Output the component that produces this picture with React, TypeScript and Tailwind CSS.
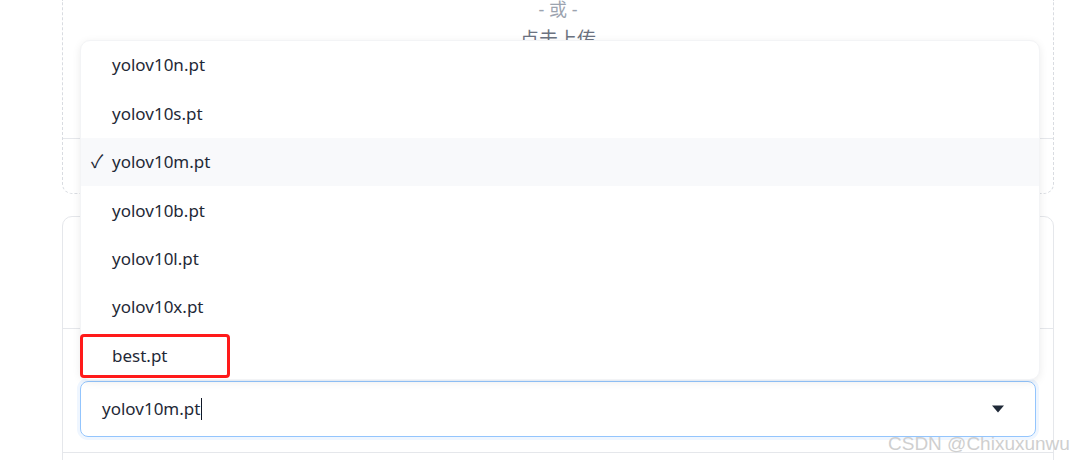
import React from "react";

const items = ["yolov10n.pt", "yolov10s.pt", "yolov10m.pt", "yolov10b.pt", "yolov10l.pt", "yolov10x.pt", "best.pt"];

export default function App() {
  return (
    <div
      className="relative w-[1072px] h-[460px] overflow-hidden bg-white"
      style={{ fontFamily: '"Noto Sans", "Noto Sans CJK SC", sans-serif' }}
    >
      <div className="px-[62px] pr-[18px]">
        {/* upload dashed box */}
        <div className="h-[194px] border-x border-b border-dashed border-[#d9dce1] rounded-b-[10px] flex flex-col">
          <div className="h-[138px] flex flex-col items-center">
            <div className="text-[18px] leading-[18px] text-[#9ca3af]">- 或 -</div>
            <div className="text-[19px] leading-[24px] text-[#6b7280] mt-[9px]">点击上传</div>
          </div>
          <div className="border-t border-[#e5e7eb]" />
        </div>
        {/* settings panel */}
        <div className="mt-[22px] h-[260px] border border-[#e5e7eb] rounded-t-[10px] flex flex-col">
          <div className="h-[111px] px-[17px] pt-[52px]">
            <div className="h-[46px] border-l border-[#e5e7eb]" />
          </div>
          <div className="border-t border-[#e5e7eb] pt-[52px]">
            <div className="mx-[17px] h-[56px] rounded-[8px] border border-[#93c5fd] shadow-[0_0_0_3px_#eff6ff] flex items-center pl-[21px] pr-[30px]">
              <span className="text-[17px] text-[#1f2937]">yolov10m.pt</span>
              <span className="w-px h-[22px] bg-[#111827] ml-[1px]" />
              <span className="ml-auto">
                <svg width="14" height="8" viewBox="0 0 14 8">
                  <path d="M1 0.5 L13 0.5 L7 7.5 Z" fill="#1f2937" />
                </svg>
              </span>
            </div>
            <div className="mt-[15px] border-t border-[#e5e7eb]" />
          </div>
        </div>
      </div>

      {/* dropdown overlay */}
      <div className="absolute left-[80px] top-[40px] w-[960px] h-[340px] bg-white rounded-[10px] shadow-[0_2px_8px_rgba(0,0,0,0.08)] border border-[#f3f4f6] overflow-hidden flex flex-col">
        {items.map((it) => (
          <div
            key={it}
            className={`h-[48.4px] shrink-0 flex items-center text-[17px] text-[#1f2937] ${it === "yolov10m.pt" ? "bg-[#f8f9fb]" : ""}`}
          >
            <span className="w-[31px] pl-[10px] text-[18px]">{it === "yolov10m.pt" ? "✓" : ""}</span>
            <span>{it}</span>
          </div>
        ))}
      </div>

      {/* red annotation box */}
      <div className="absolute left-[80px] top-[334px] w-[150px] h-[44px] border-[3px] border-[#ff1a1a] rounded-[4px]" />

      {/* watermark */}
      <div
        className="absolute left-[888px] top-[430px] text-[19px] text-[#cfcfcf] whitespace-nowrap"
        style={{ fontFamily: '"Liberation Sans", sans-serif' }}
      >
        CSDN @Chixuxunwu
      </div>
    </div>
  );
}
